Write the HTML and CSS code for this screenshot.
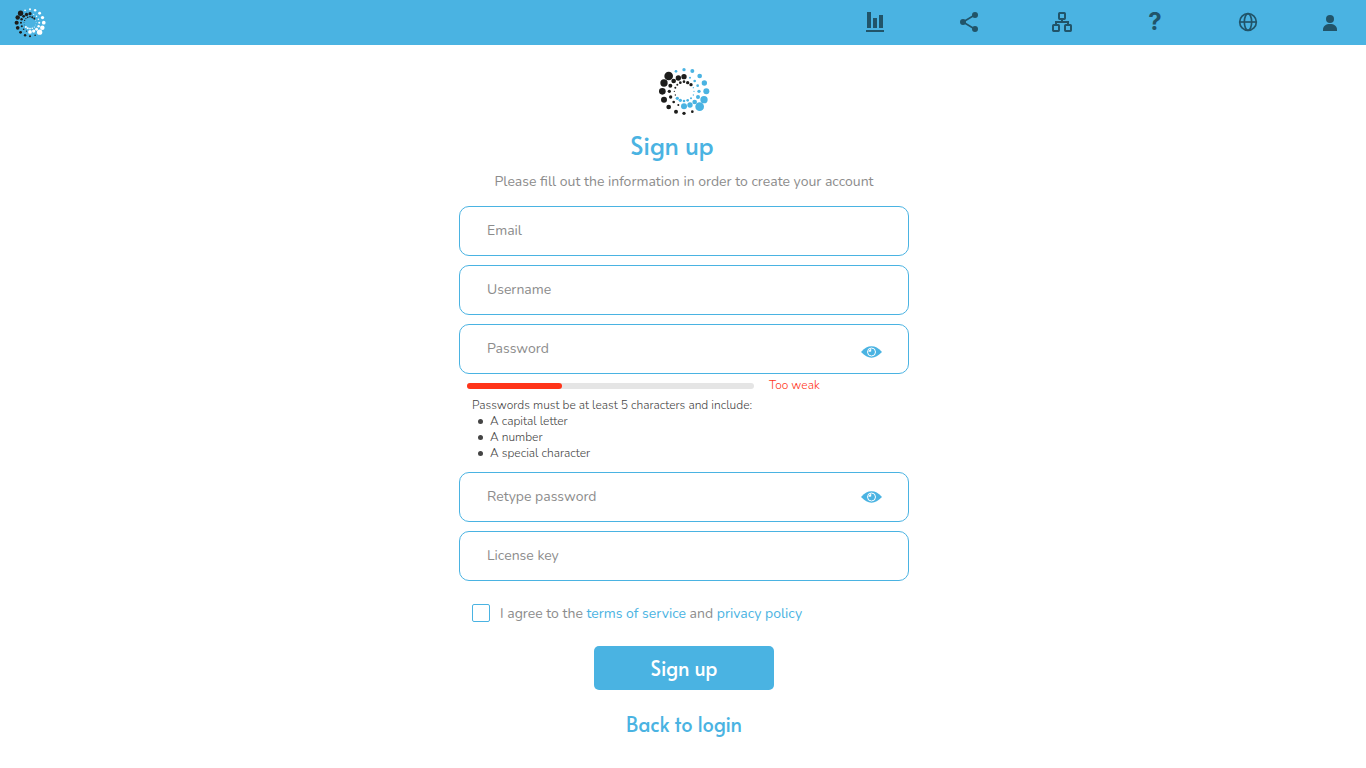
FILE: index.html
```html
<!DOCTYPE html>
<html lang="en">
<head>
<meta charset="utf-8">
<title>Sign up</title>
<meta name="viewport" content="width=device-width, initial-scale=1">
<link rel="stylesheet" href="styles.css">
</head>
<body>
<svg class="defs" aria-hidden="true">
  <symbol id="logo" viewBox="42 18 156 150">
    <g class="logo-dark">
      <circle cx="145" cy="155" r="4"/><circle cx="120" cy="160" r="5"/><circle cx="96" cy="155" r="6"/><circle cx="74" cy="141" r="7"/><circle cx="60" cy="119" r="9"/><circle cx="55" cy="94" r="10"/><circle cx="60" cy="69" r="11"/><circle cx="74" cy="48" r="13"/>
      <circle cx="103" cy="135" r="3"/><circle cx="89" cy="126" r="4"/><circle cx="80" cy="111" r="5"/><circle cx="76" cy="94" r="5"/><circle cx="79" cy="77" r="6"/><circle cx="89" cy="63" r="7"/><circle cx="103" cy="54" r="8"/><circle cx="120" cy="50" r="8"/>
      <circle cx="94" cy="105" r="2"/><circle cx="91" cy="94" r="2"/><circle cx="94" cy="83" r="3"/><circle cx="100" cy="74" r="3"/><circle cx="109" cy="68" r="4"/><circle cx="120" cy="65" r="4"/><circle cx="131" cy="68" r="5"/><circle cx="141" cy="74" r="5"/>
    </g>
    <g class="logo-light">
      <circle cx="96" cy="34" r="4"/><circle cx="120" cy="29" r="5"/><circle cx="145" cy="33" r="6"/><circle cx="167" cy="48" r="7"/><circle cx="181" cy="69" r="8"/><circle cx="187" cy="94" r="9"/><circle cx="180" cy="119" r="11"/><circle cx="167" cy="140" r="13"/>
      <circle cx="138" cy="53" r="3"/><circle cx="152" cy="63" r="4"/><circle cx="161" cy="77" r="4"/><circle cx="165" cy="94" r="5"/><circle cx="162" cy="111" r="6"/><circle cx="152" cy="126" r="7"/><circle cx="138" cy="135" r="8"/><circle cx="120" cy="139" r="9"/>
      <circle cx="148" cy="83" r="2"/><circle cx="150" cy="94" r="2"/><circle cx="148" cy="105" r="2"/><circle cx="141" cy="115" r="3"/><circle cx="131" cy="121" r="4"/><circle cx="120" cy="123" r="4"/><circle cx="109" cy="121" r="5"/><circle cx="100" cy="115" r="5"/>
    </g>
  </symbol>
  <symbol id="eye" viewBox="0 0 63 36">
    <path fill="#4ab3e2" d="M0 18C12 6 20 1 31.500 1S51 6 63 18C51 30 43 35 31.500 35S12 30 0 18Z"/>
    <circle cx="31.500" cy="18" r="12" fill="none" stroke="#fff" stroke-width="3"/>
    <path d="M24 18a8 8 0 0 1 7-8" fill="none" stroke="#fff" stroke-width="3"/>
    <circle cx="28" cy="14" r="3" fill="#fff"/>
  </symbol>
</svg>

<header class="topbar">
  <a class="brand" href="#" aria-label="Home"><svg class="brand-logo"><use href="#logo"/></svg></a>
  <nav class="topnav" aria-label="Main">
    <a href="#" aria-label="Statistics"><svg viewBox="48 36 60 60"><path d="M51 36h12v48H51zM69 54h12v30H69zM87 45h12v39H87zM48 90h54v6H48z"/></svg></a>
    <a href="#" aria-label="Share"><svg viewBox="327 36 60 60"><path class="line" d="M374 45 339 66l35 21"/><circle cx="375" cy="45" r="9"/><circle cx="339" cy="66" r="9"/><circle cx="375" cy="87" r="9"/></svg></a>
    <a href="#" aria-label="Network"><svg viewBox="36 36 60 60"><g class="line thick"><rect x="57" y="39" width="18" height="18" rx="2"/><rect x="39" y="75" width="18" height="18" rx="2"/><rect x="75" y="75" width="18" height="18" rx="2"/><path d="M66 57v9M48 75v-9h36v9"/></g></svg></a>
    <a class="help" href="#" aria-label="Help">?</a>
    <a href="#" aria-label="Language"><svg viewBox="36 36 60 60"><g class="line"><circle cx="66" cy="66" r="25"/><ellipse cx="66" cy="66" rx="11" ry="25"/><path d="M41 66h50"/></g></svg></a>
    <a class="account" href="#" aria-label="Account"><svg viewBox="282 36 60 60"><circle cx="312" cy="57" r="12"/><path d="M291 93v-4c0-11 9-17 21-17s21 6 21 17v4z"/></svg></a>
  </nav>
</header>

<main class="page">
  <svg class="hero-logo" aria-hidden="true"><use href="#logo"/></svg>
  <h1 class="title">Sign up</h1>
  <p class="intro">Please fill out the information in order to create your account</p>

  <form class="form">
    <input class="field" type="email" placeholder="Email" aria-label="Email">
    <input class="field" type="text" placeholder="Username" aria-label="Username">
    <div class="password">
      <input class="field" type="password" placeholder="Password" aria-label="Password">
      <button class="reveal reveal-low" type="button" aria-label="Show password"><svg><use href="#eye"/></svg></button>
    </div>
    <div class="rules">
      <div class="strength">
        <div class="meter"><div class="meter-fill"></div></div>
        <span class="verdict">Too weak</span>
      </div>
      <p class="rules-text">Passwords must be at least 5 characters and include:</p>
      <ul class="rules-list">
        <li>A capital letter</li>
        <li>A number</li>
        <li>A special character</li>
      </ul>
    </div>
    <div class="password">
      <input class="field" type="password" placeholder="Retype password" aria-label="Retype password">
      <button class="reveal" type="button" aria-label="Show password"><svg><use href="#eye"/></svg></button>
    </div>
    <input class="field" type="text" placeholder="License key" aria-label="License key">
    <div class="agree">
      <input class="tick" type="checkbox" id="agree">
      <label for="agree">I agree to the <a href="#">terms of service</a> and <a href="#">privacy policy</a></label>
    </div>
    <button class="submit" type="submit">Sign up</button>
    <a class="back" href="#">Back to login</a>
  </form>
</main>
</body>
</html>
```
FILE: styles.css
```css
* { box-sizing: border-box; }

body {
  margin: 0;
  background: #fff;
  color: #8c8c8c;
  font: 400 14px/20px Nunito, "Open Sans", sans-serif;
}

a { color: #4ab3e2; text-decoration: none; }
svg { display: block; }
.defs { display: none; }

.topbar {
  display: flex;
  align-items: center;
  justify-content: space-between;
  height: 45px;
  padding: 0 26px 0 14px;
  background: #4ab3e2;
}

.brand-logo { width: 32px; height: 31px; fill: #fff; }
.hero-logo { width: 52px; height: 50px; fill: #4ab3e2; }
.logo-dark { fill: #1d1d1b; }

.topnav { display: flex; align-items: center; gap: 73px; }
.topnav a {
  display: flex;
  justify-content: center;
  width: 20px;
  height: 22px;
  color: #215469;
}
.topnav svg { width: 20px; height: 20px; fill: currentColor; }
.topnav .line { fill: none; stroke: currentColor; stroke-width: 5; }
.topnav .thick { stroke-width: 6; }
.topnav .account { margin-left: -11px; }
.topnav .help { font: 700 24px/20px Inter, "Open Sans", sans-serif; }

.page {
  display: flex;
  flex-direction: column;
  align-items: center;
  padding: 21px 0 24px 2px;
}

.title {
  margin: 13px 0 0;
  padding-right: 24px;
  color: #4ab3e2;
  font: 400 25px/32px Alata, Jost, Lato, sans-serif;
}

.intro { margin: 11px 0 14px; }

.form {
  display: flex;
  flex-direction: column;
  gap: 9px;
  width: 100%;
  max-width: 450px;
}

.field {
  display: block;
  width: 100%;
  height: 50px;
  padding: 0 60px 2px 27px;
  border: 1px solid #4ab3e2;
  border-radius: 10px;
  background: #fff;
  color: #555;
  font: inherit;
}
.field::placeholder { color: #8c8c8c; opacity: 1; }

.password { display: grid; align-items: center; }
.password > * { grid-area: 1 / 1; }
.reveal {
  justify-self: end;
  margin-right: 27px;
  padding: 0;
  border: 0;
  background: none;
}
.reveal svg { width: 21px; height: 12px; }
.reveal-low { padding-top: 6px; }

.rules {
  margin-top: -7px;
  padding-left: 8px;
  color: #444;
  font-size: 12px;
  font-weight: 300;
  line-height: 16px;
}
.strength { display: flex; align-items: center; gap: 15px; height: 20px; }
.meter { width: 287px; height: 6px; border-radius: 3px; background: #e5e5e5; }
.meter-fill { width: 33%; height: 6px; border-radius: 3px; background: #ff3419; }
.verdict { height: 18px; color: #ff3419; }
.rules-text { margin: 1px 0 0 5px; }
.rules-list { margin: 0 0 2px; padding-left: 11px; list-style: none; }
.rules-list li { display: flex; align-items: center; gap: 7px; }
.rules-list li::before { content: ""; width: 5px; height: 5px; margin-top: 1px; border-radius: 50%; background: #444; }

.agree { display: flex; align-items: flex-start; gap: 10px; margin-top: 14px; padding-left: 13px; }
.tick {
  appearance: none;
  width: 18px;
  height: 18px;
  margin: 0;
  border: 1px solid #4ab3e2;
  border-radius: 2px;
}
.tick:checked { background: #4ab3e2; }

.submit {
  align-self: center;
  width: 180px;
  height: 44px;
  margin-top: 13px;
  padding-bottom: 2px;
  border: 0;
  border-radius: 5px;
  background: #4ab3e2;
  color: #fff;
  font: 400 20px/24px Alata, Jost, Lato, sans-serif;
}

.back {
  align-self: center;
  margin-top: 13px;
  font: 400 20px/24px Alata, Jost, Lato, sans-serif;
}
```
